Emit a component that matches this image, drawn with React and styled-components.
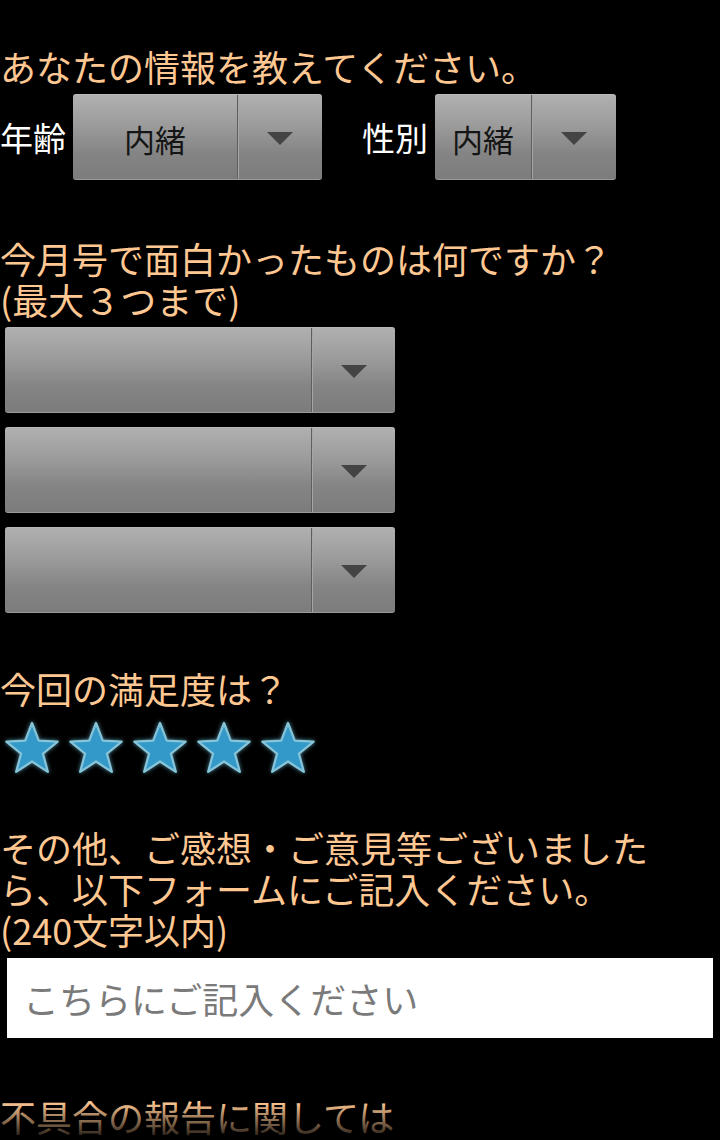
import React from 'react'
import styled, { createGlobalStyle } from 'styled-components'

const GlobalStyle = createGlobalStyle`
    html, body {
        margin: 0;
        padding: 0;
        background: #000;
    }
    body {
        font-family: "Noto Sans CJK JP", "Noto Sans", sans-serif;
    }
`

const StarIcon = () => {
    // five point star, slightly fat inner radius
    const pts = []
    for (let i = 0; i < 10; i++) {
        const r = i % 2 === 0 ? 27 : 11.5
        const a = (Math.PI / 5) * i - Math.PI / 2
        pts.push(`${(32 + r * Math.cos(a)).toFixed(2)},${(33 + r * Math.sin(a)).toFixed(2)}`)
    }
    return (
        <StarSvg viewBox="0 0 64 64" width="64" height="64">
            <polygon
                points={pts.join(' ')}
                fill="#3399c9"
                stroke="#86c4d8"
                strokeWidth="2.2"
                strokeLinejoin="round"
            />
        </StarSvg>
    )
}

const Spinner = ({ width, arrowWidth = 84, value }) => (
    <SpinnerBox $width={width}>
        <SpinnerText>{value}</SpinnerText>
        <ArrowBox $width={arrowWidth}>
            <Arrow />
        </ArrowBox>
    </SpinnerBox>
)

const App = () => {
    return (
        <>
            <GlobalStyle />
            <Page>
                <Label>あなたの情報を教えてください。</Label>
                <Row>
                    <FieldLabel>年齢</FieldLabel>
                    <Spinner width={249} value="内緒" />
                    <FieldLabel $gap={40}>性別</FieldLabel>
                    <Spinner width={181} value="内緒" />
                </Row>

                <Label $gap={58}>
                    今月号で面白かったものは何ですか？
                    <br />
                    (最大３つまで)
                </Label>
                <SpinnerList>
                    <Spinner width={390} arrowWidth={83} />
                    <Spinner width={390} arrowWidth={83} />
                    <Spinner width={390} arrowWidth={83} />
                </SpinnerList>

                <Label $gap={55}>今回の満足度は？</Label>
                <Stars>
                    {[0, 1, 2, 3, 4].map((i) => (
                        <StarIcon key={i} />
                    ))}
                </Stars>

                <Label $gap={46}>
                    その他、ご感想・ご意見等ございました
                    <br />
                    ら、以下フォームにご記入ください。
                    <br />
                    (240文字以内)
                </Label>
                <Input type="text" placeholder="こちらにご記入ください" />

                <Label $gap={58}>不具合の報告に関しては</Label>
                <Fade />
            </Page>
        </>
    )
}

const Page = styled.div`
    position: relative;
    width: 720px;
    height: 1140px;
    overflow: hidden;
    background: #000;
    padding-top: 46px;
    box-sizing: border-box;
`

const Label = styled.p`
    margin: ${({ $gap }) => $gap || 0}px 0 0 0;
    font-size: 36px;
    line-height: 41px;
    color: #ffc893;
    white-space: nowrap;
`

const Row = styled.div`
    display: flex;
    align-items: center;
    margin-top: 7px;
    height: 86px;
`

const FieldLabel = styled.span`
    margin-left: ${({ $gap }) => $gap || 0}px;
    margin-right: 7px;
    font-size: 33px;
    line-height: 40px;
    color: #fff;
`

const SpinnerBox = styled.div`
    display: flex;
    width: ${({ $width }) => $width}px;
    height: 86px;
    box-sizing: border-box;
    border-radius: 3px;
    border-top: 1px solid #b8b8b8;
    border-bottom: 1px solid #9a9a9a;
    background: linear-gradient(to bottom, #b0b0b0 0%, #9c9c9c 35%, #848484 70%, #7c7c7c 100%);
`

const SpinnerText = styled.div`
    flex: 1;
    display: flex;
    align-items: center;
    justify-content: center;
    padding-top: 2px;
    font-size: 31px;
    color: #151515;
`

const ArrowBox = styled.div`
    width: ${({ $width }) => $width}px;
    display: flex;
    align-items: center;
    justify-content: center;
    border-left: 1px solid #5f5f5f;
    box-shadow: inset 1px 0 0 #a6a6a6;
`

const Arrow = styled.div`
    width: 0;
    height: 0;
    margin-top: 2px;
    border-left: 13px solid transparent;
    border-right: 13px solid transparent;
    border-top: 13px solid #444;
`

const SpinnerList = styled.div`
    display: flex;
    flex-direction: column;
    gap: 14px;
    margin-top: 7px;
    padding-left: 5px;
`

const Stars = styled.div`
    display: flex;
    margin-top: 8px;
    height: 64px;
`

const StarSvg = styled.svg`
    display: block;
    filter: drop-shadow(0 0 2px rgba(110, 190, 215, 0.7));
`

const Input = styled.input`
    display: block;
    box-sizing: border-box;
    width: 706px;
    height: 80px;
    margin: 8px 0 0 7px;
    padding: 0 0 0 16px;
    border: none;
    outline: none;
    background: #fff;
    font-family: "Noto Sans CJK JP", "Noto Sans", sans-serif;
    font-size: 36px;
    color: #222;
    &::placeholder {
        color: #7a7a7a;
    }
`

const Fade = styled.div`
    position: absolute;
    left: 0;
    right: 0;
    bottom: 0;
    height: 38px;
    background: linear-gradient(to bottom, rgba(0, 0, 0, 0) 0%, rgba(0, 0, 0, 0.92) 100%);
    pointer-events: none;
`

export default App
